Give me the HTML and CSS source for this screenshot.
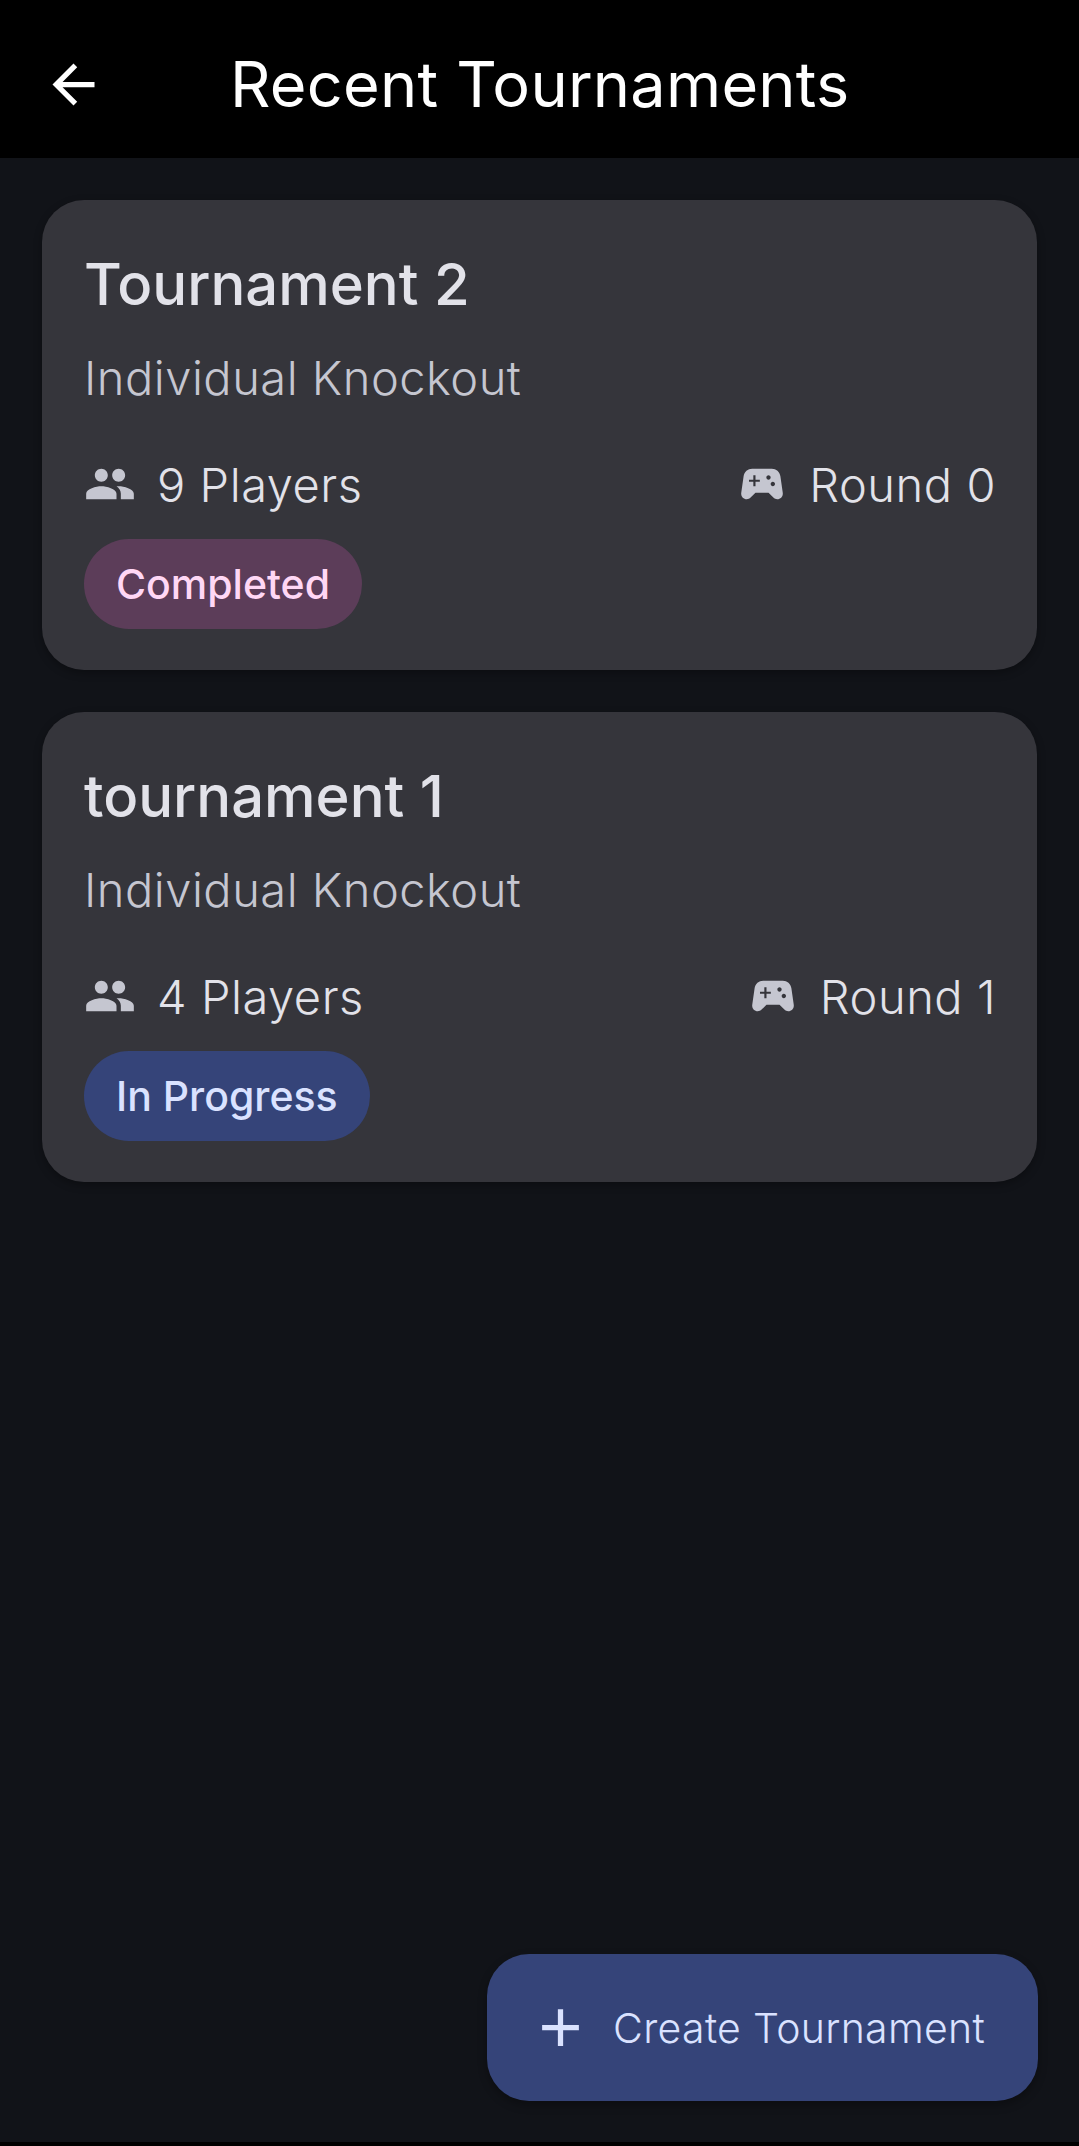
FILE: index.html
```html
<!DOCTYPE html>
<html lang="en">
<head>
    <meta charset="UTF-8">
    <meta name="viewport" content="width=device-width, initial-scale=1.0">
    <title>Recent Tournaments</title>
    <link rel="stylesheet" href="styles.css">
</head>
<body>
    <header class="top-bar">
        <svg class="back-icon" viewBox="0 0 24 24"><path d="M20 11H7.83l5.59-5.59L12 4l-8 8 8 8 1.41-1.41L7.83 13H20v-2z"/></svg>
        <h1>Recent Tournaments</h1>
    </header>

    <main class="list">
        <section class="card">
            <h2>Tournament 2</h2>
            <p class="type">Individual Knockout</p>
            <div class="meta">
                <div class="meta-item">
                    <svg class="meta-icon" viewBox="0 0 24 24"><path d="M16 11c1.66 0 2.99-1.34 2.99-3S17.66 5 16 5c-1.66 0-3 1.34-3 3s1.34 3 3 3zm-8 0c1.66 0 2.99-1.34 2.99-3S9.66 5 8 5C6.34 5 5 6.34 5 8s1.34 3 3 3zm0 2c-2.33 0-7 1.17-7 3.5V19h14v-2.5c0-2.33-4.67-3.5-7-3.5zm8 0c-.29 0-.62.02-.97.05 1.16.84 1.97 1.97 1.97 3.45V19h6v-2.5c0-2.33-4.67-3.5-7-3.5z"/></svg>
                    <span>9 Players</span>
                </div>
                <div class="meta-item">
                    <svg class="meta-icon" viewBox="0 0 24 24"><path d="M21.58 16.09l-1.09-7.66C20.21 6.46 18.52 5 16.53 5H7.47C5.48 5 3.79 6.46 3.51 8.43l-1.09 7.66C2.2 17.63 3.39 19 4.94 19c.68 0 1.32-.27 1.8-.75L9 16h6l2.25 2.25c.48.48 1.13.75 1.8.75 1.56 0 2.75-1.37 2.53-2.91zM11 11H9v2H8v-2H6v-1h2V8h1v2h2v1zm4-1c-.55 0-1-.45-1-1s.45-1 1-1 1 .45 1 1-.45 1-1 1zm2 3c-.55 0-1-.45-1-1s.45-1 1-1 1 .45 1 1-.45 1-1 1z"/></svg>
                    <span>Round 0</span>
                </div>
            </div>
            <span class="chip chip-done">Completed</span>
        </section>

        <section class="card">
            <h2>tournament 1</h2>
            <p class="type">Individual Knockout</p>
            <div class="meta">
                <div class="meta-item">
                    <svg class="meta-icon" viewBox="0 0 24 24"><path d="M16 11c1.66 0 2.99-1.34 2.99-3S17.66 5 16 5c-1.66 0-3 1.34-3 3s1.34 3 3 3zm-8 0c1.66 0 2.99-1.34 2.99-3S9.66 5 8 5C6.34 5 5 6.34 5 8s1.34 3 3 3zm0 2c-2.33 0-7 1.17-7 3.5V19h14v-2.5c0-2.33-4.67-3.5-7-3.5zm8 0c-.29 0-.62.02-.97.05 1.16.84 1.97 1.97 1.97 3.45V19h6v-2.5c0-2.33-4.67-3.5-7-3.5z"/></svg>
                    <span>4 Players</span>
                </div>
                <div class="meta-item">
                    <svg class="meta-icon" viewBox="0 0 24 24"><path d="M21.58 16.09l-1.09-7.66C20.21 6.46 18.52 5 16.53 5H7.47C5.48 5 3.79 6.46 3.51 8.43l-1.09 7.66C2.2 17.63 3.39 19 4.94 19c.68 0 1.32-.27 1.8-.75L9 16h6l2.25 2.25c.48.48 1.13.75 1.8.75 1.56 0 2.75-1.37 2.53-2.91zM11 11H9v2H8v-2H6v-1h2V8h1v2h2v1zm4-1c-.55 0-1-.45-1-1s.45-1 1-1 1 .45 1 1-.45 1-1 1zm2 3c-.55 0-1-.45-1-1s.45-1 1-1 1 .45 1 1-.45 1-1 1z"/></svg>
                    <span>Round 1</span>
                </div>
            </div>
            <span class="chip chip-active">In Progress</span>
        </section>

        <button class="fab">
            <svg class="fab-icon" viewBox="0 0 24 24"><path d="M19 13h-6v6h-2v-6H5v-2h6V5h2v6h6v2z"/></svg>
            <span>Create Tournament</span>
        </button>
    </main>

    <div class="nav-strip"></div>
</body>
</html>
```

FILE: styles.css
```css
* {
    box-sizing: border-box;
}

body {
    margin: 0;
    height: 2146px;
    display: flex;
    flex-direction: column;
    background: #111318;
    font-family: "Inter", sans-serif;
    overflow: hidden;
}

.top-bar {
    height: 158px;
    flex-shrink: 0;
    display: flex;
    align-items: center;
    padding: 10px 0 0 42px;
    background: #000;
}

.back-icon {
    width: 63px;
    height: 63px;
    fill: #fff;
}

.top-bar h1 {
    margin: 0 0 0 125px;
    font-size: 63px;
    font-weight: 400;
    letter-spacing: 0.25px;
    color: #fff;
}

.list {
    position: relative;
    flex: 1;
    display: flex;
    flex-direction: column;
    gap: 42px;
    padding: 42px;
}

.card {
    height: 470px;
    padding: 42px 42px 0;
    border-radius: 42px;
    background: #35353b;
    box-shadow: 0 3px 8px rgba(0, 0, 0, 0.3);
}

.card h2 {
    margin: 0;
    font-size: 58px;
    line-height: 84px;
    font-weight: 500;
    color: #e2e2e9;
}

.type {
    margin: 22px 0 0;
    font-size: 47px;
    line-height: 60px;
    font-weight: 300;
    letter-spacing: 0.5px;
    color: #c5c6d0;
}

.meta {
    display: flex;
    justify-content: space-between;
    align-items: center;
    margin: 43px -1px 0 0;
    height: 66px;
}

.meta-item {
    display: flex;
    align-items: center;
    gap: 21px;
    font-size: 47px;
    font-weight: 300;
    letter-spacing: 0.55px;
    color: #e2e2e9;
}

.meta-icon {
    width: 52px;
    height: 52px;
    fill: #c5c6d0;
}

.chip {
    display: inline-flex;
    align-items: center;
    height: 90px;
    margin-top: 22px;
    padding: 0 32px;
    border-radius: 45px;
    font-size: 41px;
    font-weight: 450;
}

.chip-done {
    background: #5c3d59;
    color: #ffd7f5;
}

.chip-active {
    background: #354479;
    color: #dae2ff;
}

.fab {
    position: absolute;
    right: 41px;
    bottom: 41px;
    display: flex;
    align-items: center;
    gap: 21px;
    height: 147px;
    padding: 0 53px 0 42px;
    border: 0;
    border-radius: 42px;
    background: #354479;
    color: #dae2ff;
    font-family: inherit;
    font-size: 41px;
    font-weight: 300;
    letter-spacing: 0.3px;
    box-shadow: 0 4px 10px rgba(0, 0, 0, 0.3);
}

.fab-icon {
    width: 63px;
    height: 63px;
    fill: #dae2ff;
}

.nav-strip {
    height: 4px;
    flex-shrink: 0;
    background: #000;
}
```
